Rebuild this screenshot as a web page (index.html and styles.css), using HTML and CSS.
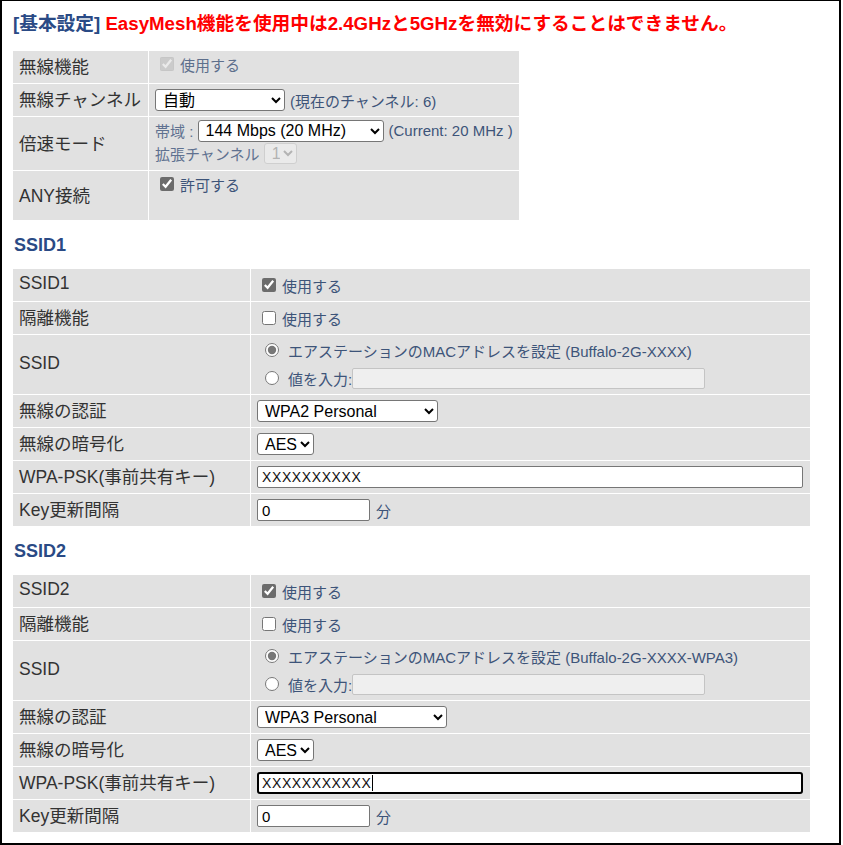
FILE: index.html
```html
<!DOCTYPE html>
<html lang="ja">
<head>
<meta charset="utf-8">
<title>基本設定</title>
<link rel="stylesheet" href="styles.css">
</head>
<body>
<div class="frame">
  <h1 class="title"><span class="blue">[基本設定]</span> <span class="red">EasyMesh機能を使用中は2.4GHzと5GHzを無効にすることはできません。</span></h1>

  <table class="grid basic">
    <tr class="h32">
      <th>無線機能</th>
      <td class="top"><label class="line"><input type="checkbox" class="cb" checked disabled><span class="dim">使用する</span></label></td>
    </tr>
    <tr class="h32">
      <th>無線チャンネル</th>
      <td><div class="line"><select class="sel w130"><option>自動</option></select><span class="note">(現在のチャンネル: 6)</span></div></td>
    </tr>
    <tr class="h53">
      <th>倍速モード</th>
      <td class="top pt2">
        <div class="line l23"><span class="soft">帯域 :&nbsp;</span><select class="sel w186"><option>144 Mbps (20 MHz)</option></select><span class="note">(Current: 20 MHz )</span></div>
        <div class="line l23"><span class="soft">拡張チャンネル&nbsp;</span><select class="sel w33 h21" disabled><option>1</option></select></div>
      </td>
    </tr>
    <tr class="h49">
      <th>ANY接続</th>
      <td class="top"><label class="line"><input type="checkbox" class="cb" checked><span>許可する</span></label></td>
    </tr>
  </table>

  <h2 class="sub">SSID1</h2>
  <table class="grid ssid">
    <tr class="h32">
      <th>SSID1</th>
      <td><label class="line"><input type="checkbox" class="cb" checked><span>使用する</span></label></td>
    </tr>
    <tr class="h32">
      <th>隔離機能</th>
      <td><label class="line"><input type="checkbox" class="cb"><span>使用する</span></label></td>
    </tr>
    <tr class="h59">
      <th>SSID</th>
      <td class="top pt4">
        <label class="line l22"><input type="radio" name="s1" class="rd" checked><span>エアステーションのMACアドレスを設定 (Buffalo-2G-XXXX)</span></label>
        <label class="line l22 mt6"><input type="radio" name="s1" class="rd"><span>値を入力:</span><input type="text" class="txt w353 dis" disabled></label>
      </td>
    </tr>
    <tr class="h32">
      <th>無線の認証</th>
      <td><div class="line"><select class="sel w181"><option>WPA2 Personal</option></select></div></td>
    </tr>
    <tr class="h32">
      <th>無線の暗号化</th>
      <td><div class="line"><select class="sel w57"><option>AES</option></select></div></td>
    </tr>
    <tr class="h32">
      <th>WPA-PSK(事前共有キー)</th>
      <td><div class="line"><input type="text" class="txt w546 key" value="XXXXXXXXXX"></div></td>
    </tr>
    <tr class="h32">
      <th>Key更新間隔</th>
      <td><div class="line"><input type="text" class="txt w113" value="0"><span class="unit">分</span></div></td>
    </tr>
  </table>

  <h2 class="sub">SSID2</h2>
  <table class="grid ssid">
    <tr class="h32">
      <th>SSID2</th>
      <td><label class="line"><input type="checkbox" class="cb" checked><span>使用する</span></label></td>
    </tr>
    <tr class="h32">
      <th>隔離機能</th>
      <td><label class="line"><input type="checkbox" class="cb"><span>使用する</span></label></td>
    </tr>
    <tr class="h59">
      <th>SSID</th>
      <td class="top pt4">
        <label class="line l22"><input type="radio" name="s2" class="rd" checked><span>エアステーションのMACアドレスを設定 (Buffalo-2G-XXXX-WPA3)</span></label>
        <label class="line l22 mt6"><input type="radio" name="s2" class="rd"><span>値を入力:</span><input type="text" class="txt w353 dis" disabled></label>
      </td>
    </tr>
    <tr class="h32">
      <th>無線の認証</th>
      <td><div class="line"><select class="sel w190"><option>WPA3 Personal</option></select></div></td>
    </tr>
    <tr class="h32">
      <th>無線の暗号化</th>
      <td><div class="line"><select class="sel w57"><option>AES</option></select></div></td>
    </tr>
    <tr class="h32">
      <th>WPA-PSK(事前共有キー)</th>
      <td><div class="line"><span class="caretwrap"><input type="text" class="txt w546 key focused" value="XXXXXXXXXXX"><span class="caret"></span></span></div></td>
    </tr>
    <tr class="h32">
      <th>Key更新間隔</th>
      <td><div class="line"><input type="text" class="txt w113" value="0"><span class="unit">分</span></div></td>
    </tr>
  </table>
</div>
</body>
</html>
```

FILE: styles.css
```css
html, body {
  margin: 0;
  padding: 0;
  background: #fff;
}

body {
  font-family: "Liberation Sans", "Noto Sans CJK JP", sans-serif;
}

.frame {
  box-sizing: border-box;
  width: 841px;
  height: 845px;
  border: 2px solid #000;
  border-top-width: 1px;
  padding: 0 0 0 10px;
}

.title {
  margin: 11px 0 14px 1px;
  font-size: 18.7px;
  line-height: 24px;
  font-weight: bold;
  white-space: nowrap;
}

.blue {
  color: #2a4a85;
}

.red {
  color: #f00;
}

.sub {
  margin: 12px 0 11px 2px;
  font-size: 18px;
  line-height: 24px;
  font-weight: bold;
  color: #2a4a85;
}

.grid {
  border-collapse: separate;
  border-spacing: 1px;
  table-layout: fixed;
  background: #fff;
}

.basic {
  width: 508px;
}

.basic th {
  width: 135px;
}

.ssid {
  width: 799px;
}

.ssid th {
  width: 237px;
}

.grid th,
.grid td {
  box-sizing: border-box;
  background: #e1e1e1;
  padding: 0 0 0 6px;
  vertical-align: middle;
  text-align: left;
}

.grid th {
  font-weight: normal;
  font-size: 17.5px;
  color: #333;
  white-space: nowrap;
  padding-bottom: 3px;
}

.grid td {
  font-size: 15px;
  color: #3d5479;
}

.h32 > th, .h32 > td { height: 32px; }
.h49 > th, .h49 > td { height: 49px; }
.h53 > th, .h53 > td { height: 53px; }
.h59 > th, .h59 > td { height: 59px; }

.grid td.top {
  vertical-align: top;
}

.grid td.pt2 { padding-top: 2px; }
.grid td.pt4 { padding-top: 4px; }

.line {
  display: flex;
  align-items: center;
  height: 22px;
  white-space: nowrap;
}

.basic td.top > label.line {
  margin-top: 2px;
}

.l22 { height: 22px; }
.l23 { height: 23px; }
.mt6 { margin-top: 6px; }

.cb {
  width: 14px;
  height: 14px;
  margin: 0 6px 0 5px;
  accent-color: #6c6c6c;
}

.rd {
  width: 14px;
  height: 14px;
  margin: 0 9px 0 8px;
  accent-color: #777;
}

.dim {
  color: #5d6f8c;
}

.soft {
  color: #5f7190;
}

.note {
  margin-left: 5px;
}

.sel {
  box-sizing: border-box;
  height: 22px;
  font-family: "Liberation Sans", "Noto Sans CJK JP", sans-serif;
  font-size: 16px;
  color: #000;
  background: #fff;
  border: 1px solid #767676;
  border-radius: 3px;
  padding: 0 0 0 3px;
  margin: 0;
}

.sel:disabled {
  color: #a0a0a0;
  border-color: #c8c8c8;
  background: #efefef;
}

.h21 { height: 21px; }
.w33 { width: 33px; }
.w57 { width: 57px; }
.w130 { width: 130px; }
.w181 { width: 181px; }
.w186 { width: 186px; }
.w190 { width: 190px; }

.txt {
  box-sizing: border-box;
  height: 22px;
  margin: 0;
  padding: 0 4px;
  font-family: "Liberation Sans", "Noto Sans CJK JP", sans-serif;
  font-size: 15px;
  color: #000;
  background: #fff;
  border: 1px solid #767676;
  border-radius: 2px;
  outline: none;
}

.txt.dis {
  height: 21px;
  background: #efefef;
  border-color: #c4c4c4;
}

.w113 { width: 113px; }
.w353 { width: 353px; }
.w546 { width: 546px; }

.key {
  font-size: 14px;
  letter-spacing: 0.6px;
  color: #111;
}

.focused {
  border: 2px solid #000;
  border-radius: 3px;
  padding: 0 3px;
}

.caretwrap {
  position: relative;
  display: inline-flex;
}

.caret {
  position: absolute;
  left: 115px;
  top: 3px;
  width: 1px;
  height: 16px;
  background: #000;
}

.unit {
  margin-left: 6px;
}
```
